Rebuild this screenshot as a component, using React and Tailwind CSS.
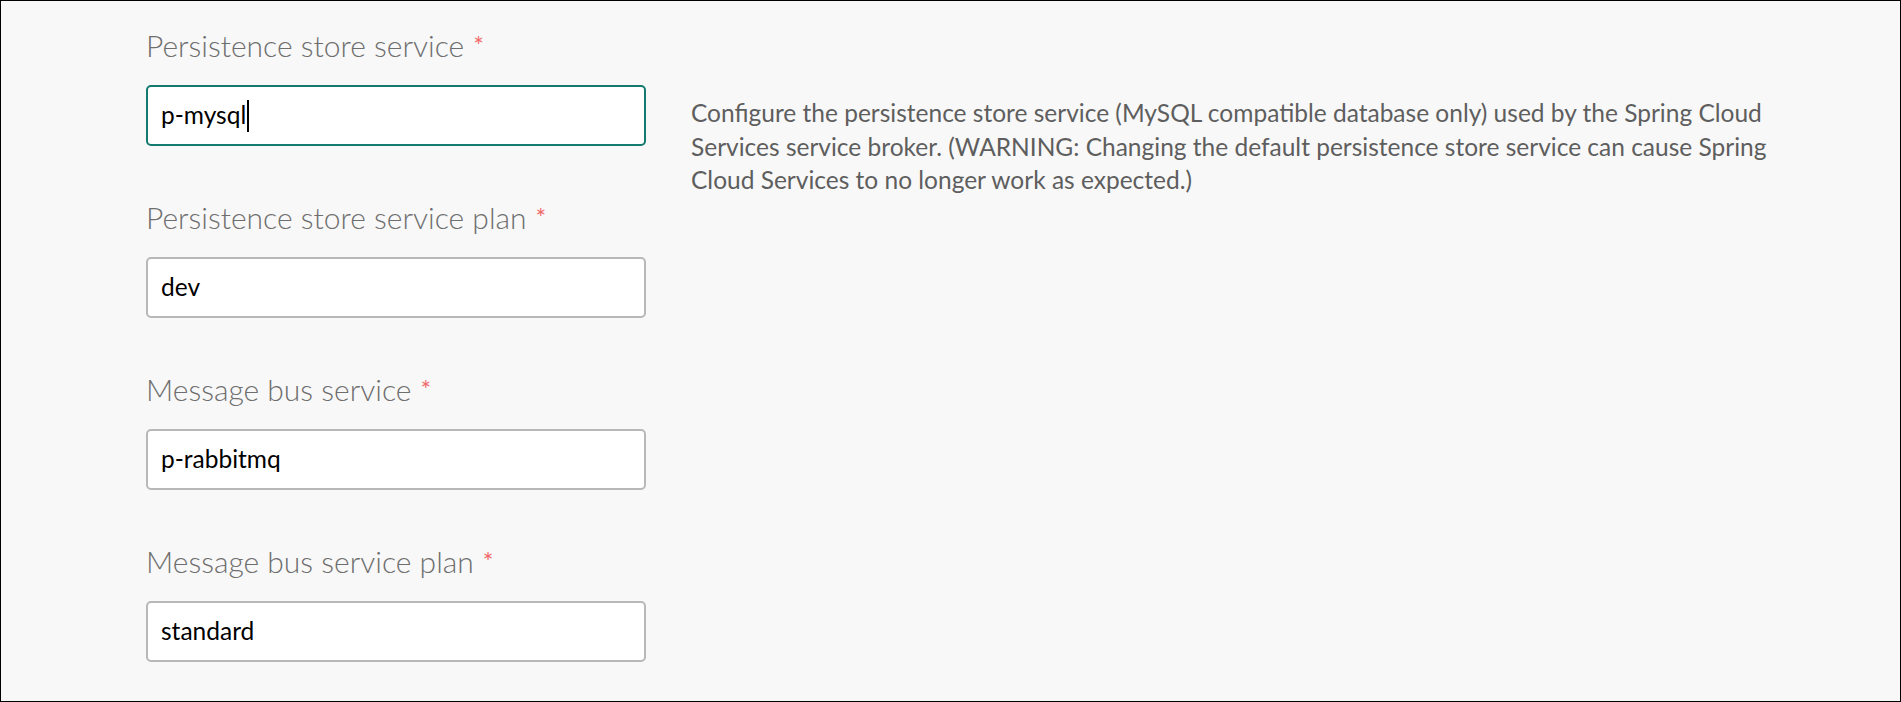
import React from "react";

const labelFont = { fontFamily: "Lato, 'Open Sans', sans-serif" };

function Label({ children }) {
  return (
    <div
      className="h-[36px] text-[30px] leading-[36px] font-light text-[#6e6e6e] whitespace-nowrap"
      style={labelFont}
    >
      {children}
      <span className="relative top-[6px] ml-[9px] align-top text-[25px] font-normal leading-none text-[#f06a6a]">*</span>
    </div>
  );
}

function Field({ value, focused }) {
  return (
    <div
      className={
        "mt-[22px] flex h-[61px] w-[500px] items-center rounded-[5px] border-2 bg-white pl-[13px] text-[24.5px] text-black " +
        (focused ? "border-[#147a6f]" : "border-[#b8b8b8]")
      }
      style={labelFont}
    >
      <span>{value}</span>
      {focused && <span className="ml-[1px] h-[32px] w-[2px] bg-black" />}
    </div>
  );
}

function Group({ label, value, focused }) {
  return (
    <div className="flex flex-col">
      <Label>{label}</Label>
      <Field value={value} focused={focused} />
    </div>
  );
}

export default function App() {
  return (
    <div className="h-[702px] w-[1901px] overflow-hidden border border-black bg-[#f8f8f8]">
      <div className="flex flex-col gap-[53px] pl-[145px] pt-[26px]">
        <div className="flex h-[119px] items-start">
          <Group label="Persistence store service" value="p-mysql" focused />
          <p
            className="ml-[45px] mt-[69px] w-[1100px] text-[24.5px] leading-[33.5px] text-[#5e5e5e]"
            style={labelFont}
          >
            Configure the persistence store service (MySQL compatible database only) used by the Spring Cloud
            Services service broker. (WARNING: Changing the default persistence store service can cause Spring
            Cloud Services to no longer work as expected.)
          </p>
        </div>
        <Group label="Persistence store service plan" value="dev" />
        <Group label="Message bus service" value="p-rabbitmq" />
        <Group label="Message bus service plan" value="standard" />
      </div>
    </div>
  );
}
